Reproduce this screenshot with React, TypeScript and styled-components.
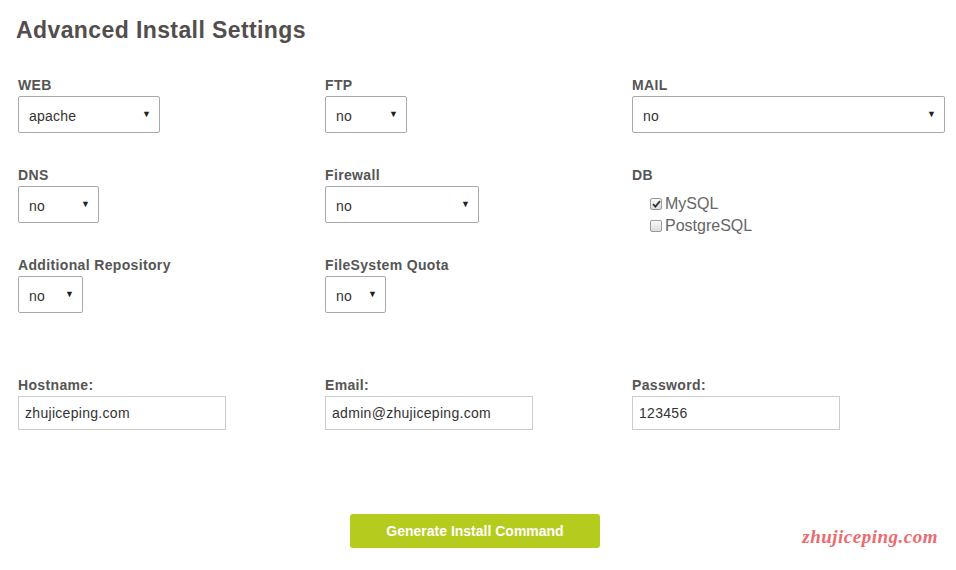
import React from 'react'
import styled, { createGlobalStyle } from 'styled-components'

const GlobalStyle = createGlobalStyle`
  html, body {
    margin: 0;
    padding: 0;
    background: #ffffff;
  }
  body {
    font-family: "Liberation Sans", Arial, sans-serif;
    color: #555555;
  }
`

interface SelectField {
  label: string;
  value: string;
  width: number;
}

const selectRows: SelectField[][] = [
  [
    { label: 'WEB', value: 'apache', width: 142 },
    { label: 'FTP', value: 'no', width: 82 },
    { label: 'MAIL', value: 'no', width: 313 }
  ],
  [
    { label: 'DNS', value: 'no', width: 81 },
    { label: 'Firewall', value: 'no', width: 154 }
  ],
  [
    { label: 'Additional Repository', value: 'no', width: 65 },
    { label: 'FileSystem Quota', value: 'no', width: 61 }
  ]
]

const textFields = [
  { label: 'Hostname:', value: 'zhujiceping.com' },
  { label: 'Email:', value: 'admin@zhujiceping.com' },
  { label: 'Password:', value: '123456' }
]

const databases = [
  { name: 'MySQL', checked: true },
  { name: 'PostgreSQL', checked: false }
]

function Select({ field }: { field: SelectField }) {
  return (
    <Field>
      <Label>{field.label}</Label>
      <SelectBox width={field.width}>
        <SelectValue>{field.value}</SelectValue>
        <Arrow>▼</Arrow>
      </SelectBox>
    </Field>
  )
}

function CheckMark() {
  return (
    <svg width="9" height="8" viewBox="0 0 9 8">
      <path d="M1 4.2 L3.4 6.6 L8 1.2" fill="none" stroke="#333" strokeWidth="1.8" />
    </svg>
  )
}

export default function App() {
  return (
    <>
      <GlobalStyle />
      <Page>
        <Title>Advanced Install Settings</Title>
        <Grid>
          {selectRows[0].map((f) => (
            <Select key={f.label} field={f} />
          ))}
          {selectRows[1].map((f) => (
            <Select key={f.label} field={f} />
          ))}
          <Field>
            <Label>DB</Label>
            <CheckList>
              {databases.map((db) => (
                <CheckRow key={db.name}>
                  <CheckBox>{db.checked && <CheckMark />}</CheckBox>
                  <CheckText>{db.name}</CheckText>
                </CheckRow>
              ))}
            </CheckList>
          </Field>
          {selectRows[2].map((f) => (
            <Select key={f.label} field={f} />
          ))}
        </Grid>
        <InputGrid>
          {textFields.map((f) => (
            <Field key={f.label}>
              <Label>{f.label}</Label>
              <TextInput defaultValue={f.value} />
            </Field>
          ))}
        </InputGrid>
        <ButtonRow>
          <GenerateButton>Generate Install Command</GenerateButton>
        </ButtonRow>
        <Watermark>zhujiceping.com</Watermark>
      </Page>
    </>
  )
}

const Page = styled.div`
  position: relative;
  width: 956px;
  height: 570px;
  box-sizing: border-box;
  padding: 17px 0 0 18px;
  overflow: hidden;
`

const Title = styled.h1`
  margin: 0 0 34px -2px;
  font-size: 23px;
  line-height: 26px;
  letter-spacing: 0.4px;
  font-weight: bold;
  color: #534d4d;
`

const Grid = styled.div`
  display: grid;
  grid-template-columns: 307px 307px 314px;
  grid-auto-rows: 57px;
  row-gap: 33px;
`

const Field = styled.div`
  display: flex;
  flex-direction: column;
  align-items: flex-start;
`

const Label = styled.label`
  font-size: 14px;
  line-height: 16px;
  letter-spacing: 0.35px;
  font-weight: bold;
  color: #555555;
  margin-bottom: 3px;
`

const SelectBox = styled.div<{ width: number }>`
  display: flex;
  align-items: center;
  justify-content: space-between;
  box-sizing: border-box;
  width: ${(p) => p.width}px;
  height: 37px;
  padding: 2px 8px 0 10px;
  border: 1px solid #a9a9a9;
  border-radius: 2px;
  background: #ffffff;
`

const SelectValue = styled.span`
  font-size: 14px;
  letter-spacing: 0.2px;
  color: #333333;
`

const Arrow = styled.span`
  font-size: 9px;
  margin-bottom: 3px;
  color: #222222;
`

const CheckList = styled.div`
  display: flex;
  flex-direction: column;
  margin: 7px 0 0 18px;
`

const CheckRow = styled.div`
  display: flex;
  align-items: center;
  height: 22px;
`

const CheckBox = styled.span`
  display: flex;
  align-items: center;
  justify-content: center;
  box-sizing: border-box;
  width: 12px;
  height: 12px;
  margin-right: 3px;
  border: 1px solid #9a9a9a;
  border-radius: 2px;
  background: linear-gradient(#fafafa, #dcdcdc);
`

const CheckText = styled.span`
  font-size: 16px;
  color: #666666;
`

const InputGrid = styled.div`
  display: grid;
  grid-template-columns: 307px 307px 307px;
  margin-top: 63px;
`

const TextInput = styled.input`
  box-sizing: border-box;
  width: 208px;
  height: 34px;
  padding: 0 6px;
  border: 1px solid #cccccc;
  border-radius: 0;
  font-family: "Liberation Sans", Arial, sans-serif;
  font-size: 14px;
  letter-spacing: 0.3px;
  color: #333333;
  outline: none;
`

const ButtonRow = styled.div`
  display: flex;
  justify-content: center;
  width: 914px;
  margin-top: 84px;
`

const GenerateButton = styled.button`
  width: 250px;
  height: 34px;
  border: none;
  border-radius: 3px;
  background: #b5cc1e;
  color: #ffffff;
  font-family: "Liberation Sans", Arial, sans-serif;
  font-size: 14px;
  font-weight: bold;
  cursor: pointer;
`

const Watermark = styled.div`
  position: absolute;
  right: 18px;
  bottom: 22px;
  font-family: "Liberation Serif", "DejaVu Serif", serif;
  font-style: italic;
  font-size: 19px;
  font-weight: bold;
  letter-spacing: 0.5px;
  color: #ea6c70;
`
